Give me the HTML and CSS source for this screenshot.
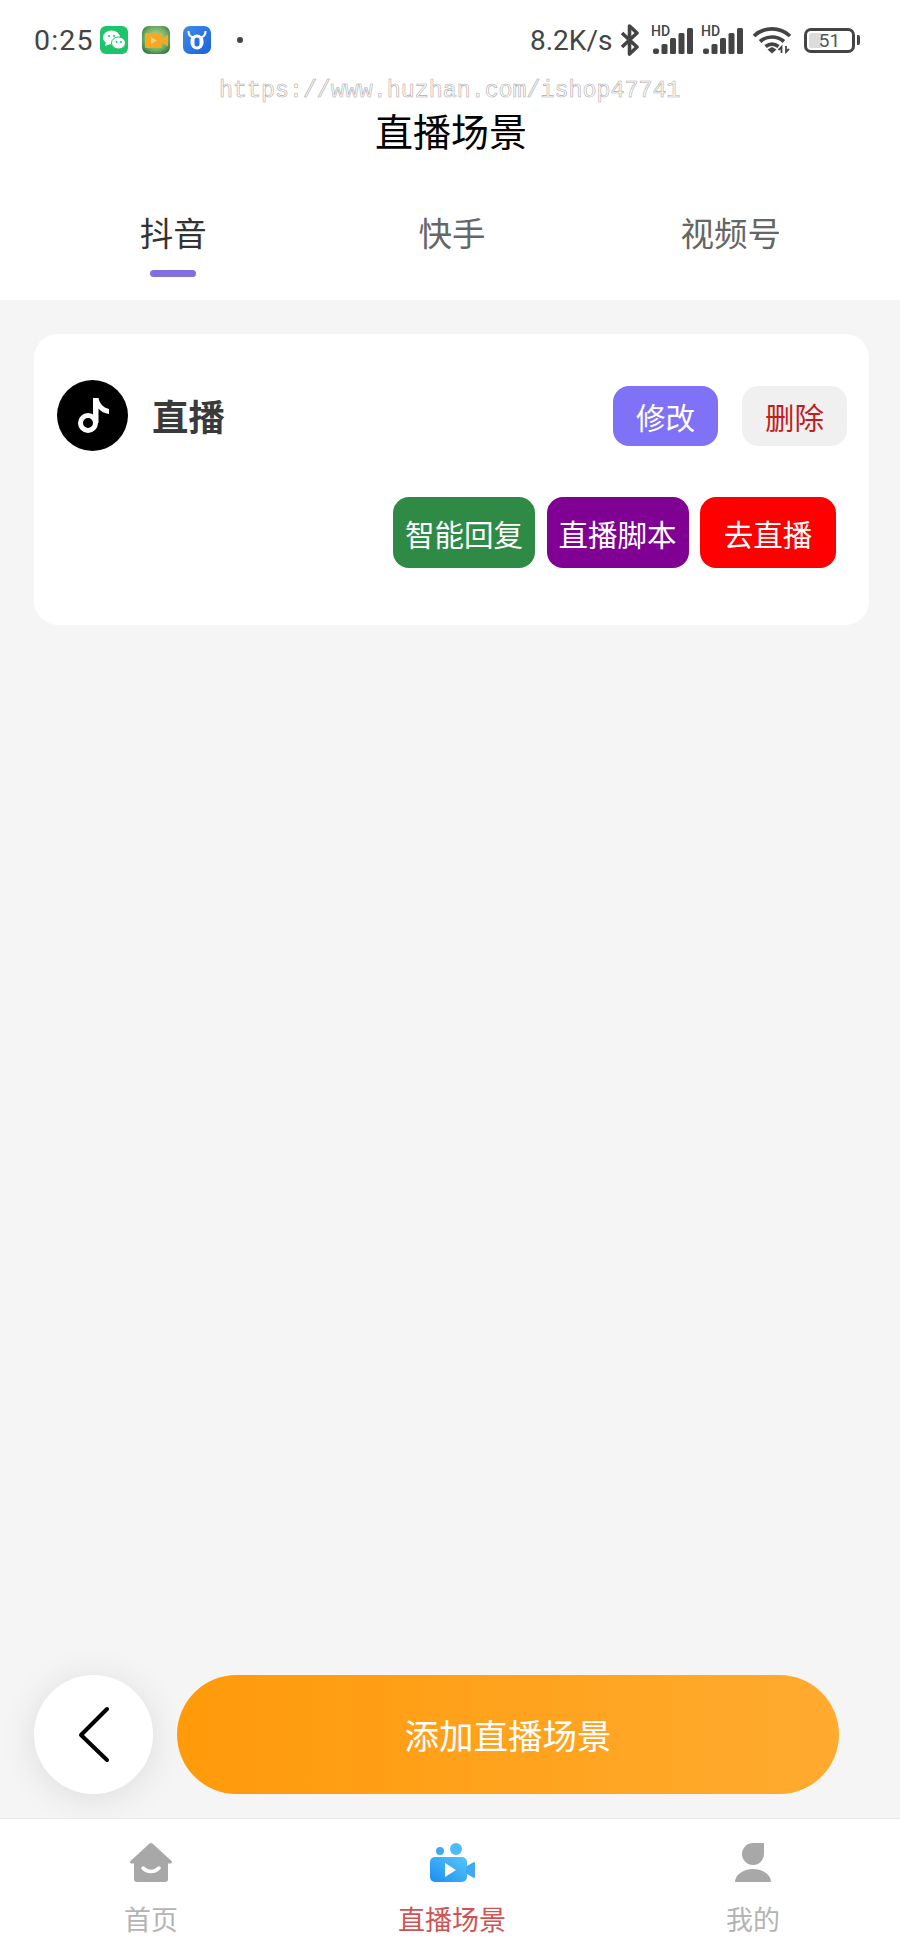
FILE: index.html
```html
<!DOCTYPE html>
<html lang="zh-CN">
<head>
<meta charset="utf-8">
<title>直播场景</title>
<link rel="stylesheet" href="styles.css">
</head>
<body>
<div class="page">
  <div class="watermark">https://www.huzhan.com/ishop47741</div>
  <header class="header">
    <div class="status">
      <div class="status-left">
        <span class="time">0:25</span>
        <svg class="app app-first" viewBox="0 0 28 28"><rect width="28" height="28" rx="6" fill="#1cc46c"/><ellipse cx="11.5" cy="11.5" rx="8.5" ry="7" fill="#fff"/><path d="M6 16l-1 4 5-2z" fill="#fff"/><ellipse cx="18.5" cy="17" rx="7" ry="6" fill="#fff" stroke="#1cc46c"/><circle cx="9" cy="10" r="1.1" fill="#1cc46c"/><circle cx="14" cy="10" r="1.1" fill="#1cc46c"/><circle cx="16.5" cy="16" r="1" fill="#1cc46c"/><circle cx="21" cy="16" r="1" fill="#1cc46c"/></svg>
        <svg class="app" viewBox="0 0 28 28"><defs><radialGradient id="vg" cx=".5" cy=".45" r=".7"><stop offset="0" stop-color="#c8dca0"/><stop offset=".6" stop-color="#6fae62"/><stop offset="1" stop-color="#1f5f2e"/></radialGradient></defs><rect width="28" height="28" rx="7" fill="url(#vg)"/><rect x="3" y="7" width="17" height="15" rx="1" fill="#f5a823"/><path d="M19 13l7-4.500v12L19 16z" fill="#f5a823"/><path d="M9 11l6 3.500L9 18z" fill="#fbd07a"/></svg>
        <svg class="app" viewBox="0 0 28 28"><defs><linearGradient id="bg" x1="0" y1="0" x2="1" y2="1"><stop offset="0" stop-color="#3f8be8"/><stop offset="1" stop-color="#1c62e0"/></linearGradient></defs><rect width="28" height="28" rx="7" fill="url(#bg)"/><path d="M5.500 5c0 3.500 2 5.500 3.500 6h10c1.500-.5 3.500-2.500 3.500-6" fill="none" stroke="#fff" stroke-width="2"/><rect x="7.500" y="8.500" width="13" height="15" rx="6.500" fill="#fff"/><rect x="11.500" y="11.500" width="5" height="9" rx="2.500" fill="#2a70e2"/></svg>
        <span class="dot"></span>
      </div>
      <div class="status-right">
        <span class="speed">8.2K/s</span>
        <svg class="bt" viewBox="0 0 20 32"><path d="M2 9l15 14-7.500 7V2L17 9 2 23" fill="none" stroke="#444" stroke-width="3.600" stroke-linejoin="round"/></svg>
        <div class="signal">
          <span class="hd">HD</span>
          <svg class="bars" viewBox="0 0 44 30"><rect x="4" y="23.500" width="6" height="5.500" rx="2"/><rect x="12.500" y="19" width="6" height="10" rx="1.500"/><rect x="21" y="13" width="6" height="16" rx="1.500"/><rect x="29.500" y="8" width="6" height="21" rx="1.500"/><rect x="38" y="3" width="6" height="26" rx="1.500"/></svg>
        </div>
        <div class="signal">
          <span class="hd">HD</span>
          <svg class="bars" viewBox="0 0 44 30"><rect x="4" y="23.500" width="6" height="5.500" rx="2"/><rect x="12.500" y="19" width="6" height="10" rx="1.500"/><rect x="21" y="13" width="6" height="16" rx="1.500"/><rect x="29.500" y="8" width="6" height="21" rx="1.500"/><rect x="38" y="3" width="6" height="26" rx="1.500"/></svg>
        </div>
        <svg class="wifi" viewBox="0 0 40 28"><path d="M2 10c10-9.500 26-9.500 36 0M8 15.500c7-6 17-6 24 0M13.500 20.500c4-3 9-3 13 0" fill="none" stroke="#444" stroke-width="3.700"/><path d="M15.500 23.500l4.500-2.500 4.500 2.500-4.500 4z" fill="#444"/><path d="M29.500 27v-6l-3 3M34 20v6l3-3" fill="none" stroke="#444" stroke-width="1.800"/></svg>
        <div class="battery-wrap">
          <div class="battery"><span class="battery-fill"></span><span class="battery-num">51</span></div>
          <span class="battery-nub"></span>
        </div>
      </div>
    </div>
    <h1 class="title">直播场景</h1>
    <nav class="tabs">
      <div class="tab tab-active"><span>抖音</span><i class="tab-line"></i></div>
      <div class="tab"><span>快手</span><i class="tab-line tab-line-off"></i></div>
      <div class="tab"><span>视频号</span><i class="tab-line tab-line-off"></i></div>
    </nav>
  </header>

  <main class="main">
    <section class="card">
      <div class="card-top">
        <svg class="logo" viewBox="0 0 71 71"><circle cx="35.500" cy="35.500" r="35.500" fill="#000"/><circle cx="31" cy="43" r="7.500" fill="none" stroke="#fff" stroke-width="5"/><path d="M36 18h5.500c1 5.500 4.500 9.500 10.500 11v5c-4.500-.5-8-2.500-10.500-5.500V43H36z" fill="#fff"/></svg>
        <span class="card-name">直播</span>
        <button class="btn btn-small btn-edit">修改</button>
        <button class="btn btn-small btn-del">删除</button>
      </div>
      <div class="card-actions">
        <button class="btn btn-big btn-green">智能回复</button>
        <button class="btn btn-big btn-purple">直播脚本</button>
        <button class="btn btn-big btn-red">去直播</button>
      </div>
    </section>

    <div class="actions">
      <button class="back" aria-label="返回"><svg viewBox="0 0 36 60" class="back-icon"><path d="M31 4L5 30l26 25" fill="none" stroke="#000" stroke-width="4" stroke-linecap="round" stroke-linejoin="round"/></svg></button>
      <button class="add">添加直播场景</button>
    </div>
  </main>

  <footer class="tabbar">
    <div class="bar-item">
      <svg class="bar-icon" viewBox="0 0 44 40"><path d="M22 0c.8 0 1.500.4 2 .9L42.500 18c1 1 .5 2.500-1 2.500H39V36a3 3 0 0 1-3 3H8a3 3 0 0 1-3-3V20.500H2.500C1 20.500.5 19 1.500 18L20 .9c.5-.5 1.200-.9 2-.9z" fill="#a8a8a8"/><path d="M14 25c4 4.500 12 4.500 16 0" fill="none" stroke="#fff" stroke-width="3.500" stroke-linecap="round"/></svg>
      <span class="bar-label">首页</span>
    </div>
    <div class="bar-item bar-active">
      <svg class="bar-icon" viewBox="0 0 46 40"><defs><linearGradient id="cam" x1="0" y1="1" x2="1" y2="0"><stop offset="0" stop-color="#1c8ef2"/><stop offset="1" stop-color="#56c6f8"/></linearGradient></defs><circle cx="11" cy="8" r="4" fill="#3fa9f5"/><circle cx="27" cy="6" r="6" fill="#4dbcf6"/><rect x="1" y="14" width="37" height="25" rx="5" fill="url(#cam)"/><path d="M38 24l7-4v14l-7-4z" fill="#3fa9f5" stroke="#3fa9f5" stroke-width="2" stroke-linejoin="round"/><path d="M16 20l11 7-11 7z" fill="#fff"/></svg>
      <span class="bar-label">直播场景</span>
    </div>
    <div class="bar-item">
      <svg class="bar-icon" viewBox="0 0 44 40"><path d="M33 0v11a11 11 0 1 1-11-11z" fill="#a8a8a8"/><path d="M4 39c0-7 8-13 18-13s18 6 18 13z" fill="#a8a8a8"/></svg>
      <span class="bar-label">我的</span>
    </div>
  </footer>
</div>
</body>
</html>
```

FILE: styles.css
```css
* { box-sizing: border-box; }
html, body { margin: 0; padding: 0; }
body { font-family: "Noto Sans CJK SC", "Noto Sans", sans-serif; background: #f5f5f5; }

.page { position: relative; display: flex; flex-direction: column; width: 900px; height: 1950px; overflow: hidden; }

.watermark {
  position: absolute; left: 219px; top: 76px;
  font-family: "Liberation Mono", monospace; font-size: 23.3px; line-height: 30px;
  color: #fff; -webkit-text-stroke: 0.6px #adadad; white-space: nowrap;
}

.header { background: #fff; }
.status { display: flex; justify-content: space-between; align-items: center; height: 80px; padding: 0 40px 0 34px; }
.status-left, .status-right { display: flex; align-items: center; }
.time { font-family: Roboto, sans-serif; font-size: 28.500px; letter-spacing: 1.200px; color: #444; width: 66px; }
.app { width: 28px; height: 28px; margin-right: 13.500px; }
.app-first { margin-left: 0; }
.dot { width: 6px; height: 6px; border-radius: 50%; background: #444; margin-left: 12px; }
.speed { font-family: Roboto, sans-serif; font-size: 28px; color: #444; width: 90px; }
.bt { width: 20px; height: 32px; margin-right: 9px; }
.signal { position: relative; width: 44px; height: 30px; margin-right: 6px; }
.bars { display: block; width: 44px; height: 30px; fill: #444; }
.hd { position: absolute; left: 2px; top: 0; font-family: Roboto, sans-serif; font-size: 14px; line-height: 13px; font-weight: 500; color: #444; }
.wifi { width: 40px; height: 28px; margin-left: 3px; margin-right: 12px; }
.battery-wrap { display: flex; align-items: center; gap: 2px; }
.battery { position: relative; display: flex; align-items: center; justify-content: center; width: 51px; height: 25px; border: 3px solid #444; border-radius: 7px; overflow: hidden; }
.battery-fill { position: absolute; left: 2px; top: 2px; bottom: 2px; width: 13px; background: #dcdcdc; border-radius: 2px; }
.battery-num { position: relative; font-family: Roboto, sans-serif; font-size: 19px; line-height: 1; color: #555; }
.battery-nub { width: 3px; height: 10px; background: #444; border-radius: 0 2px 2px 0; }

.title { margin: 0; height: 104px; padding-left: 2px; font-size: 38px; line-height: 100px; font-weight: 400; color: #000; text-align: center; }

.tabs { display: grid; grid-template-columns: repeat(3, 1fr); padding: 28px 30px 23px 34px; }
.tab { display: flex; flex-direction: column; align-items: center; font-size: 33.500px; line-height: 40px; color: #666; }
.tab-active { color: #333; }
.tab-line { display: block; width: 46px; height: 7px; margin-top: 18px; border-radius: 4px; background: #7f6fe0; }
.tab-line-off { background: transparent; }

.main { flex: 1; display: flex; flex-direction: column; justify-content: space-between; padding: 34px 0 24px; background: #f5f5f5; }

.card { display: flex; flex-direction: column; margin: 0 31px 0 34px; height: 291px; padding: 46px 22px 57px 23px; background: #fff; border-radius: 24px; }
.card-top { display: flex; align-items: center; height: 71px; }
.logo { width: 71px; height: 71px; margin-right: 24px; }
.card-name { flex: 1; font-size: 36.500px; font-weight: 700; color: #3a3a3a; }
.btn { border: 0; padding: 0; font-family: inherit; color: #fff; }
.btn-small { width: 105px; height: 60px; margin-left: 24px; border-radius: 16px; font-size: 29.500px; }
.btn-edit { background: #7f72f6; }
.btn-del { background: #f0f0f0; color: #c21d1d; }
.card-actions { display: flex; justify-content: flex-end; gap: 11.500px; margin-top: 46px; padding-right: 11px; }
.btn-big { height: 71px; border-radius: 16px; font-size: 29.500px; }
.btn-green { width: 142px; background: #2f8a45; }
.btn-purple { width: 142px; background: #800094; }
.btn-red { width: 136px; background: #ff0000; }

.actions { display: flex; align-items: center; gap: 24px; padding: 0 61px 0 34px; }
.back { display: flex; align-items: center; justify-content: center; width: 119px; height: 119px; flex: none; padding: 0; border: 0; border-radius: 50%; background: #fff; box-shadow: 0 4px 36px rgba(0, 0, 0, .10); }
.back-icon { width: 36px; height: 60px; }
.add { flex: 1; height: 119px; padding: 0 0 2px; border: 0; border-radius: 60px; background: linear-gradient(90deg, #ff9a0a, #ffab30); color: #fff; font-family: inherit; font-size: 34.500px; }

.tabbar { display: flex; justify-content: space-between; height: 132px; padding: 24px 87px 0 91px; background: #fff; border-top: 1px solid #e9e9e9; }
.bar-item { display: flex; flex-direction: column; align-items: center; width: 120px; font-size: 27px; color: #b4b4b4; }
.bar-icon { width: 46px; height: 40px; }
.bar-label { margin-top: 17px; line-height: 38px; white-space: nowrap; }
.bar-active { color: #cf5353; }
```
